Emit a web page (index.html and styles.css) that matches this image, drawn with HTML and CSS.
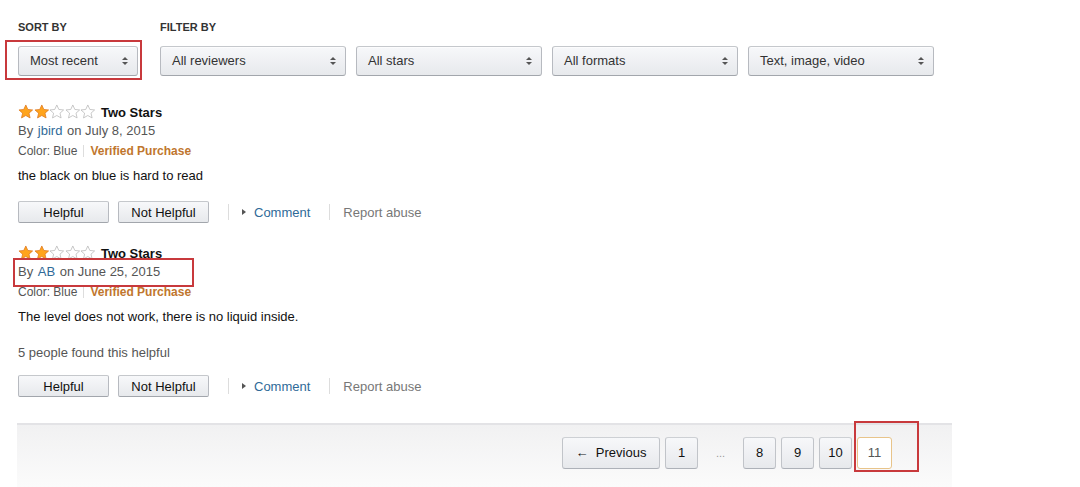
FILE: index.html
```html
<!DOCTYPE html>
<html lang="en">
<head>
    <meta charset="UTF-8">
    <title>Customer Reviews</title>
    <link rel="stylesheet" href="styles.css">
</head>
<body>

<svg width="0" height="0" class="defs">
    <defs>
        <symbol id="star" viewBox="0 0 16 16">
            <polygon points="8,1 10.1,5.6 15,6.1 11.3,9.4 12.4,14.3 8,11.8 3.6,14.3 4.7,9.4 1,6.1 5.9,5.6"/>
        </symbol>
    </defs>
</svg>

<!-- Sort / filter bar -->
<div class="toolbar">
    <div class="sort">
        <div class="label">Sort by</div>
        <div class="marked select-mark">
            <div class="select sort-select">Most recent <span class="arrows"></span></div>
        </div>
    </div>
    <div class="filter">
        <div class="label">Filter by</div>
        <div class="filters">
            <div class="select">All reviewers <span class="arrows"></span></div>
            <div class="select">All stars <span class="arrows"></span></div>
            <div class="select">All formats <span class="arrows"></span></div>
            <div class="select">Text, image, video <span class="arrows"></span></div>
        </div>
    </div>
</div>

<!-- Review 1 -->
<div class="review">
    <div class="title-row">
        <span class="stars">
            <svg class="on"><use href="#star"/></svg><svg class="on"><use href="#star"/></svg><svg><use href="#star"/></svg><svg><use href="#star"/></svg><svg><use href="#star"/></svg>
        </span>
        <span class="title">Two Stars</span>
    </div>
    <div class="byline">By <a href="#">jbird</a> on July 8, 2015</div>
    <div class="meta">Color: Blue <span class="bar"></span> <span class="verified">Verified Purchase</span></div>
    <p class="body">the black on blue is hard to read</p>
    <div class="actions">
        <button class="btn helpful">Helpful</button>
        <button class="btn">Not Helpful</button>
        <span class="bar tall"></span>
        <a href="#" class="comment"><span class="tri"></span>Comment</a>
        <span class="bar tall"></span>
        <span class="report">Report abuse</span>
    </div>
</div>

<!-- Review 2 -->
<div class="review second">
    <div class="title-row">
        <span class="stars">
            <svg class="on"><use href="#star"/></svg><svg class="on"><use href="#star"/></svg><svg><use href="#star"/></svg><svg><use href="#star"/></svg><svg><use href="#star"/></svg>
        </span>
        <span class="title">Two Stars</span>
    </div>
    <div class="byline marked by-mark">By <a href="#">AB</a> on June 25, 2015</div>
    <div class="meta">Color: Blue <span class="bar"></span> <span class="verified">Verified Purchase</span></div>
    <p class="body">The level does not work, there is no liquid inside.</p>
    <div class="votes">5 people found this helpful</div>
    <div class="actions">
        <button class="btn helpful">Helpful</button>
        <button class="btn">Not Helpful</button>
        <span class="bar tall"></span>
        <a href="#" class="comment"><span class="tri"></span>Comment</a>
        <span class="bar tall"></span>
        <span class="report">Report abuse</span>
    </div>
</div>

<!-- Pagination -->
<div class="pager-band">
    <ul class="pager">
        <li class="page prev">&larr;&nbsp;&nbsp;Previous</li>
        <li class="page">1</li>
        <li class="dots">...</li>
        <li class="page">8</li>
        <li class="page">9</li>
        <li class="page">10</li>
        <li class="page current marked page-mark">11</li>
    </ul>
</div>

</body>
</html>
```

FILE: styles.css
```css
/* General */
body {
    font-family: 'Liberation Sans', Arial, sans-serif;
    font-size: 13px;
    color: #111;
    background: #fff;
    margin: 0;
    padding: 20px 0 0 18px;
}
a { color: #2f6a98; text-decoration: none; }
.defs { position: absolute; }

/* Red annotation boxes */
.marked { position: relative; }
.marked::after {
    content: "";
    position: absolute;
    border: 2px solid #c8393c;
    pointer-events: none;
}
.select-mark::after { top: -6px; left: -13px; right: -4px; bottom: -4px; }
.by-mark::after { top: -4px; left: -5px; width: 177px; bottom: -5px; }
.page-mark::after { top: -17px; left: -4px; right: -28px; bottom: -4px; }

/* Toolbar */
.toolbar {
    display: flex;
    gap: 22px;
}
.label {
    font-size: 11px;
    font-weight: bold;
    text-transform: uppercase;
    color: #333;
    line-height: 14px;
    margin-bottom: 12px;
}
.filters {
    display: flex;
    gap: 10px;
}
.select {
    position: relative;
    width: 186px;
    height: 30px;
    box-sizing: border-box;
    padding: 0 11px;
    line-height: 28px;
    font-size: 13px;
    color: #333;
    border: 1px solid #adb1b8;
    border-color: #c5c8cc #b7bac0 #a2a6ac;
    border-radius: 3px;
    background: linear-gradient(#f7f8fa, #e7e9ec);
    box-shadow: 0 1px 0 rgba(255,255,255,.6) inset;
}
.sort-select { width: 120px; }
.arrows {
    position: absolute;
    right: 9px;
    top: 10px;
    width: 0;
    height: 0;
    border-left: 3px solid transparent;
    border-right: 3px solid transparent;
    border-bottom: 3px solid #555;
}
.arrows::after {
    content: "";
    position: absolute;
    left: -3px;
    top: 5px;
    border-left: 3px solid transparent;
    border-right: 3px solid transparent;
    border-top: 3px solid #555;
}

/* Reviews */
.review { margin-top: 27px; }
.review.second { margin-top: 21px; }
.title-row {
    display: flex;
    align-items: center;
    height: 18px;
}
.stars { display: flex; margin-right: 5px; }
.stars svg {
    width: 15.6px;
    height: 15.6px;
    fill: #fff;
    stroke: #b9b9b9;
    stroke-width: 0.8;
}
.stars svg.on { fill: #ffa41c; stroke: #de7921; }
.title { font-weight: bold; font-size: 13px; }
.byline, .meta {
    color: #555;
    line-height: 20px;
}
.byline a { margin: 0 1px; }
.meta { font-size: 12px; display: flex; align-items: center; gap: 6px; }
.bar {
    display: inline-block;
    width: 1px;
    height: 12px;
    background: #ddd;
}
.bar.tall { height: 16px; margin: 0 13px 0 10px; }
.verified { color: #c0762e; font-weight: bold; }
.body {
    margin: 5px 0 0;
    line-height: 19px;
    color: #111;
}
.votes {
    margin-top: 17px;
    color: #555;
    line-height: 19px;
}
.actions {
    display: flex;
    align-items: center;
    margin-top: 16px;
    height: 22px;
}
.second .actions { margin-top: 13px; }
.btn {
    width: 91px;
    height: 22px;
    margin-right: 9px;
    font-family: inherit;
    font-size: 13px;
    color: #111;
    border: 1px solid #adb1b8;
    border-color: #c5c8cc #b7bac0 #a2a6ac;
    border-radius: 2px;
    background: linear-gradient(#f7f8fa, #e7e9ec);
    padding: 0;
}
.comment { display: flex; align-items: center; margin-right: 9px; }
.tri {
    width: 0;
    height: 0;
    border-top: 3px solid transparent;
    border-bottom: 3px solid transparent;
    border-left: 4px solid #555;
    margin-right: 8px;
}
.report { color: #777; }

/* Pagination band */
.pager-band {
    width: 935px;
    margin: 26px 0 0 -1px;
    padding: 12px 0 18px;
    border-top: 2px solid #e3e3e6;
    background: linear-gradient(#f1f1f2, #fbfbfb);
}
.pager {
    list-style: none;
    margin: 0;
    padding: 0 60px 0 0;
    display: flex;
    justify-content: flex-end;
    align-items: center;
    gap: 5px;
}
.page {
    min-width: 33px;
    height: 32px;
    box-sizing: border-box;
    padding: 0 6px;
    line-height: 30px;
    text-align: center;
    font-size: 13px;
    color: #111;
    border: 1px solid #c5c8cc;
    border-color: #cdd0d4 #c1c4c9 #adb1b8;
    border-radius: 3px;
    background: linear-gradient(#f7f8fa, #e7e9ec);
}
.prev { width: 98px; }
.dots { width: 35px; text-align: center; color: #999; font-size: 11px; }
.current {
    min-width: 35px;
    background: #fff;
    border-color: #e8c48a;
    color: #555;
}
```
